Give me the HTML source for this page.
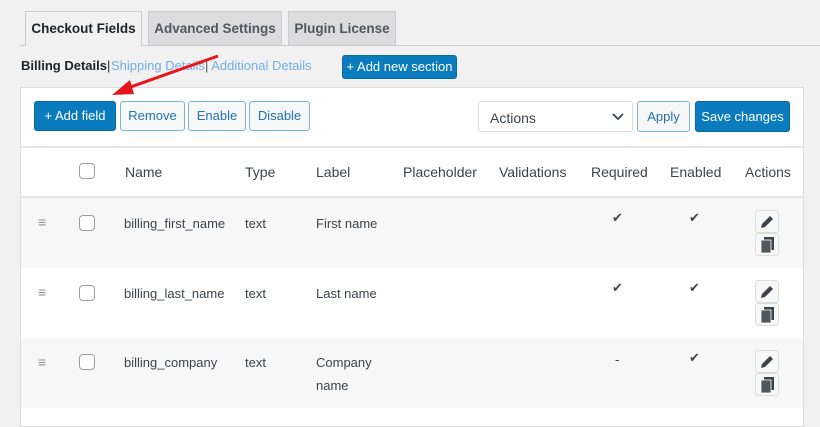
<!DOCTYPE html>
<html><head><style>
*{box-sizing:border-box;margin:0;padding:0}
body{width:820px;height:417px;overflow:hidden;background:#f1f1f1;font-family:"Liberation Sans",sans-serif;color:#3c434a;position:relative;font-size:13px}
.abs{position:absolute}
.tab{position:absolute;top:11px;height:34px;border:1px solid #ccc;border-bottom:none;background:#dcdcde;font-size:13.5px;font-weight:bold;color:#50575e;padding-top:9px;text-align:center}
.btn{position:absolute;height:30px;border:1px solid #7fb3d5;background:#f6f7f7;color:#2271b1;font-size:13px;text-align:center;line-height:28px;border-radius:3px}
.pri{background:#0a7bbd;border-color:#0a6aa3;color:#fff}
.row{position:absolute;left:21px;width:782px;height:70px}
.cb{position:absolute;left:79px;width:16px;height:16px;border:1px solid #9a9da1;border-radius:4px;background:#fff}
.t{position:absolute;font-size:13px;color:#3c434a}
.h{position:absolute;top:164px;font-size:14px;color:#3c434a}
.ib{position:absolute;left:755px;width:24px;height:23px;border:1px solid #ddd;border-radius:3px;background:#f6f7f7}
</style></head><body>
<div class="abs" style="left:20px;top:45px;width:800px;height:1px;background:#ccc"></div>
<div class="tab" style="left:25px;width:117px;background:#f1f1f1;color:#1d2327;height:35px">Checkout Fields</div>
<div class="tab" style="left:148px;width:134px">Advanced Settings</div>
<div class="tab" style="left:288px;width:108px">Plugin License</div>
<div class="abs" style="left:21px;top:58px;font-size:13px;font-weight:bold;color:#1d2327">Billing Details<span style="font-weight:normal">|</span></div>
<div class="abs" style="left:111px;top:58px;font-size:13px;color:#72aee6;white-space:nowrap">Shipping Details<span style="color:#555">|</span> Additional Details</div>
<div class="btn pri" style="left:342px;top:55px;width:115px;height:24px;line-height:22px">+ Add new section</div>
<div class="abs" style="left:20px;top:87px;width:784px;height:340px;background:#fff;border:1px solid #ddd"></div>
<div class="btn pri" style="left:34px;top:101px;width:82px">+ Add field</div>
<div class="btn" style="left:120px;top:101px;width:65px">Remove</div>
<div class="btn" style="left:188px;top:101px;width:58px">Enable</div>
<div class="btn" style="left:249px;top:101px;width:61px">Disable</div>
<div class="abs" style="left:478px;top:101px;width:155px;height:31px;border:1px solid #ddd;border-radius:3px;font-size:14px;padding:8px 11px;color:#3c434a">Actions<svg style="position:absolute;right:8px;top:11px" width="12" height="8"><path d="M1 1l5 5 5-5" stroke="#3c434a" stroke-width="1.8" fill="none"/></svg></div>
<div class="btn" style="left:637px;top:101px;width:53px;height:31px;line-height:29px">Apply</div>
<div class="btn pri" style="left:695px;top:101px;width:95px;height:31px;line-height:29px">Save changes</div>
<svg class="abs" style="left:100px;top:52px" width="125" height="50"><path d="M118 4 L22 38" stroke="#e8161b" stroke-width="3"/><path d="M12 43 L30 28 L34 42Z" fill="#e8161b"/></svg>
<div class="abs" style="left:21px;top:146px;width:782px;height:2px;background:#e5e5e5"></div>
<div class="cb" style="top:163px"></div>
<div class="h" style="left:125px">Name</div><div class="h" style="left:245px">Type</div><div class="h" style="left:316px">Label</div><div class="h" style="left:403px">Placeholder</div><div class="h" style="left:499px">Validations</div><div class="h" style="left:591px">Required</div><div class="h" style="left:670px">Enabled</div><div class="h" style="left:745px">Actions</div>
<div class="abs" style="left:21px;top:196px;width:782px;height:2px;background:#e5e5e5"></div>

<div class="row" style="top:198px;background:#f7f7f7"></div>
<div class="row" style="top:268px;background:#fff"></div>
<div class="row" style="top:338px;background:#f7f7f7"></div>

<div class="t" style="left:38px;top:214px;color:#8c8f94;font-size:14px">≡</div>
<div class="cb" style="top:215px"></div>
<div class="t" style="left:124px;top:216px">billing_first_name</div><div class="t" style="left:245px;top:216px">text</div><div class="t" style="left:316px;top:216px">First name</div>
<div class="t" style="left:612px;top:210px">✔</div><div class="t" style="left:689px;top:210px">✔</div>
<div class="ib" style="top:210px"><svg width="22" height="21"><path d="M5 17l1-4 8-8 3 3-8 8z" fill="#3c434a"/></svg></div>
<div class="ib" style="top:233px"><svg width="22" height="21"><rect x="8" y="3" width="10" height="13" fill="#3c434a"/><rect x="5" y="6" width="10" height="13" fill="#50575e" stroke="#fff" stroke-width=".8"/></svg></div>

<div class="t" style="left:38px;top:284px;color:#8c8f94;font-size:14px">≡</div>
<div class="cb" style="top:285px"></div>
<div class="t" style="left:124px;top:286px">billing_last_name</div><div class="t" style="left:245px;top:286px">text</div><div class="t" style="left:316px;top:286px">Last name</div>
<div class="t" style="left:612px;top:280px">✔</div><div class="t" style="left:689px;top:280px">✔</div>
<div class="ib" style="top:280px"><svg width="22" height="21"><path d="M5 17l1-4 8-8 3 3-8 8z" fill="#3c434a"/></svg></div>
<div class="ib" style="top:303px"><svg width="22" height="21"><rect x="8" y="3" width="10" height="13" fill="#3c434a"/><rect x="5" y="6" width="10" height="13" fill="#50575e" stroke="#fff" stroke-width=".8"/></svg></div>

<div class="t" style="left:38px;top:354px;color:#8c8f94;font-size:14px">≡</div>
<div class="cb" style="top:354px"></div>
<div class="t" style="left:124px;top:355px">billing_company</div><div class="t" style="left:245px;top:355px">text</div><div class="t" style="left:316px;top:355px;line-height:23px;margin-top:-4px">Company<br>name</div>
<div class="t" style="left:615px;top:352px">-</div><div class="t" style="left:689px;top:350px">✔</div>
<div class="ib" style="top:350px"><svg width="22" height="21"><path d="M5 17l1-4 8-8 3 3-8 8z" fill="#3c434a"/></svg></div>
<div class="ib" style="top:373px"><svg width="22" height="21"><rect x="8" y="3" width="10" height="13" fill="#3c434a"/><rect x="5" y="6" width="10" height="13" fill="#50575e" stroke="#fff" stroke-width=".8"/></svg></div>
</body></html>
